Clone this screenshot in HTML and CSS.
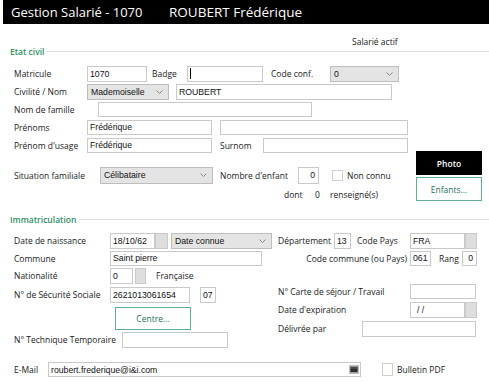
FILE: index.html
```html
<!DOCTYPE html>
<html lang="fr">
<head>
<meta charset="utf-8">
<title>Gestion Salarié - 1070</title>
<link rel="stylesheet" href="styles.css">
</head>
<body>
<header class="titlebar">
  <span class="title-main">Gestion Salarié - 1070</span>
  <span class="title-name">ROUBERT Frédérique</span>
</header>
<div class="status"><span class="status-text">Salarié actif</span></div>
<div class="legend"><span class="legend-text">Etat civil</span><span class="legend-line"></span></div>

<div class="row r1">
  <span class="lbl w73">Matricule</span>
  <span class="field w60">1070</span>
  <span class="lbl ml5 w35">Badge</span>
  <span class="field w76"><span class="caret"></span></span>
  <span class="lbl ml8 w59">Code conf.</span>
  <span class="select w69"><span>0</span><svg class="chev" viewBox="0 0 7 4"><polyline points="0.5,0.5 3.5,3.5 6.5,0.5"/></svg></span>
</div>

<div class="row r2">
  <span class="lbl w73">Civilité / Nom</span>
  <span class="select w82"><span>Mademoiselle</span><svg class="chev" viewBox="0 0 7 4"><polyline points="0.5,0.5 3.5,3.5 6.5,0.5"/></svg></span>
  <span class="field ml7 w216">ROUBERT</span>
</div>

<div class="row r3">
  <span class="lbl w84">Nom de famille</span>
  <span class="field w214"></span>
</div>

<div class="row r4">
  <span class="lbl w73">Prénoms</span>
  <span class="field w125">Frédérique</span>
  <span class="field ml8 w188"></span>
</div>

<div class="split">
  <div class="split-main">
    <div class="row r5">
      <span class="lbl w73">Prénom d'usage</span>
      <span class="field w125">Frédérique</span>
      <span class="lbl ml8 w43">Surnom</span>
      <span class="field w145"></span>
    </div>
    <div class="row r6">
      <span class="lbl w86">Situation familiale</span>
      <span class="select w113"><span>Célibataire</span><svg class="chev" viewBox="0 0 7 4"><polyline points="0.5,0.5 3.5,3.5 6.5,0.5"/></svg></span>
      <span class="lbl ml7 w78">Nombre d'enfant</span>
      <span class="field num w21">0</span>
      <span class="check ml13"></span>
      <span class="lbl ml4">Non connu</span>
    </div>
    <div class="row r7">
      <span class="lbl ml270 w31">dont</span>
      <span class="lbl w15">0</span>
      <span class="lbl">renseigné(s)</span>
    </div>
  </div>
  <div class="side-buttons">
    <button class="btn btn-dark">Photo</button>
    <button class="btn btn-outline">Enfants...</button>
  </div>
</div>

<div class="legend legend2"><span class="legend-text">Immatriculation</span><span class="legend-line"></span></div>

<div class="row r8">
  <span class="lbl w96">Date de naissance</span>
  <span class="field w45">18/10/62</span>
  <span class="sq w13"></span>
  <span class="select ml3 w101"><span>Date connue</span><svg class="chev" viewBox="0 0 7 4"><polyline points="0.5,0.5 3.5,3.5 6.5,0.5"/></svg></span>
  <span class="lbl ml6 w56">Département</span>
  <span class="field w17">13</span>
  <span class="lbl ml6 w53">Code Pays</span>
  <span class="field w55">FRA</span>
  <span class="sq w12"></span>
</div>

<div class="row r9">
  <span class="lbl w96">Commune</span>
  <span class="field w152">Saint pierre</span>
  <span class="lbl right ml40 w108">Code commune (ou Pays)</span>
  <span class="field w21">061</span>
  <span class="lbl ml8 w23">Rang</span>
  <span class="field num w15">0</span>
</div>

<div class="cols">
  <div class="col-left">
    <div class="row r10">
      <span class="lbl w96">Nationalité</span>
      <span class="field w23">0</span>
      <span class="sq ml2 w11"></span>
      <span class="lbl ml10">Française</span>
    </div>
    <div class="row r11">
      <span class="lbl w96">N° de Sécurité Sociale</span>
      <span class="field w80">2621013061654</span>
      <span class="field ml10 w16">07</span>
    </div>
    <div class="row r12">
      <button class="btn btn-outline ml101 w76">Centre...</button>
    </div>
    <div class="row r13">
      <span class="lbl w108">N° Technique Temporaire</span>
      <span class="field w106"></span>
    </div>
  </div>
  <div class="col-right">
    <div class="rrow rr1">
      <span class="lbl w132">N° Carte de séjour / Travail</span>
      <span class="field w66"></span>
    </div>
    <div class="rrow rr2">
      <span class="lbl w132">Date d'expiration</span>
      <span class="field w55 date">/ /</span>
      <span class="sq w12"></span>
    </div>
    <div class="rrow rr3">
      <span class="lbl w84">Délivrée par</span>
      <span class="field w114"></span>
    </div>
  </div>
</div>

<div class="row r14">
  <span class="lbl w34">E-Mail</span>
  <span class="field mail w313"><span>roubert.frederique@i&amp;i.com</span><svg class="mail-icon" viewBox="0 0 10 9"><rect x="0.5" y="0.5" width="9" height="8" fill="#9a9a9a" stroke="#bdbdbd"/><rect x="1.5" y="2" width="7" height="5" fill="#2e2e2e"/><line x1="2" y1="3" x2="8" y2="3" stroke="#777" stroke-width="0.8"/></svg></span>
  <span class="check tall ml21"></span>
  <span class="lbl ml4">Bulletin PDF</span>
</div>
</body>
</html>
```

FILE: styles.css
```css
* { box-sizing: border-box; }
html, body { margin: 0; padding: 0; background: #fff; }
body {
  width: 489px;
  height: 383px;
  overflow: hidden;
  font-family: "Open Sans", "Noto Sans", sans-serif;
  font-size: 8.5px;
  color: #1a1a1a;
}
.titlebar {
  margin-left: 3px;
  height: 24px;
  background: #000;
  color: #fff;
  display: flex;
  align-items: center;
  padding-left: 8px;
  font-size: 13px;
  white-space: nowrap;
}
.title-main { width: 158px; flex: none; }
.title-name { font-size: 13.5px; }
.status { height: 22px; padding-top: 13px; display: flex; }
.status-text { margin-left: 352px; line-height: 10px; }
.legend { height: 10px; display: flex; align-items: center; padding-left: 10px; }
.legend-text { color: #2b8f5f; font-weight: 600; white-space: nowrap; }
.legend-line { flex: 1; height: 1px; background: #dedede; margin-left: 3px; }
.legend2 { margin-top: 12px; }

.row { display: flex; align-items: center; padding-left: 14px; }
.rrow { display: flex; align-items: center; }
.lbl { white-space: nowrap; flex: none; line-height: 10px; }
.right { text-align: right; padding-right: 3px; }
.field {
  flex: none;
  height: 100%;
  border: 1px solid #c9c9c9;
  background: #fff;
  font-family: "Liberation Sans", Arial, sans-serif;
  font-size: 8.7px;
  color: #111;
  padding-left: 2px;
  padding-bottom: 1px;
  display: flex;
  align-items: center;
  white-space: nowrap;
  overflow: hidden;
}
.field.num { justify-content: flex-end; padding-right: 3px; }
.field.date { padding-left: 6px; }
.field.mail { justify-content: space-between; padding-right: 1px; padding-bottom: 0; }
.caret { width: 1px; height: 11px; background: #000; }
.select {
  flex: none;
  height: 100%;
  border: 1px solid #bdbdbd;
  background: #e4e4e4;
  font-family: "Liberation Sans", Arial, sans-serif;
  font-size: 8.7px;
  color: #111;
  padding: 0 5px 1px 3px;
  display: flex;
  align-items: center;
  justify-content: space-between;
  white-space: nowrap;
}
.chev { width: 7px; height: 4px; fill: none; stroke: #8a8a8a; stroke-width: 1; }
.sq { flex: none; height: 100%; background: #dedede; border: 1px solid #cacaca; }
.check { flex: none; width: 11px; height: 11px; border: 1px solid #cfcfcf; background: #fff; }
.check.tall { height: 13px; }
.mail-icon { width: 10px; height: 9px; flex: none; }

.btn {
  flex: none;
  font-family: "Open Sans", "Noto Sans", sans-serif;
  font-size: 8.5px;
  padding: 0;
  cursor: default;
}
.btn-dark { background: #000; color: #fff; border: 1px solid #000; font-weight: 600; height: 24px; }
.btn-outline { background: #fff; color: #24705a; border: 1px solid #5fae92; height: 24px; }

.split { display: flex; }
.split-main { flex: 1; }
.side-buttons {
  width: 66px;
  margin-top: 16px;
  margin-right: 7px;
  display: flex;
  flex-direction: column;
  gap: 2px;
}

.cols { display: flex; }
.col-left { width: 278px; flex: none; }
.col-right { flex: 1; }

.r1 { margin-top: 10px; height: 16px; }
.r2 { margin-top: 2px; height: 16px; }
.r3 { margin-top: 2px; height: 15px; }
.r4 { margin-top: 3px; height: 15px; }
.r5 { margin-top: 3px; height: 15px; }
.r6 { margin-top: 14px; height: 17px; }
.r7 { margin-top: 4px; height: 14px; }
.r8 { margin-top: 9px; height: 16px; }
.r9 { margin-top: 2px; height: 15px; }
.r10 { margin-top: 2px; height: 16px; }
.r11 { margin-top: 3px; height: 16px; }
.r12 { margin-top: 4px; height: 23px; }
.r12 .btn { height: 23px; }
.r13 { margin-top: 2px; height: 16px; }
.rr1 { margin-top: 18px; height: 15px; }
.rr2 { margin-top: 3px; height: 16px; }
.rr3 { margin-top: 3px; height: 16px; }
.r14 { margin-top: 14px; height: 15px; }

.ml2 { margin-left: 2px; }
.ml3 { margin-left: 3px; }
.ml4 { margin-left: 4px; }
.ml5 { margin-left: 5px; }
.ml6 { margin-left: 6px; }
.ml7 { margin-left: 7px; }
.ml8 { margin-left: 8px; }
.ml10 { margin-left: 10px; }
.ml13 { margin-left: 13px; }
.ml21 { margin-left: 21px; }
.ml40 { margin-left: 40px; }
.ml101 { margin-left: 101px; }
.ml270 { margin-left: 270px; }

.w11 { width: 11px; }
.w12 { width: 12px; }
.w13 { width: 13px; }
.w15 { width: 15px; }
.w16 { width: 16px; }
.w17 { width: 17px; }
.w21 { width: 21px; }
.w23 { width: 23px; }
.w31 { width: 31px; }
.w34 { width: 34px; }
.w35 { width: 35px; }
.w43 { width: 43px; }
.w45 { width: 45px; }
.w53 { width: 53px; }
.w55 { width: 55px; }
.w56 { width: 56px; }
.w59 { width: 59px; }
.w60 { width: 60px; }
.w66 { width: 66px; }
.w69 { width: 69px; }
.w73 { width: 73px; }
.w76 { width: 76px; }
.w78 { width: 78px; }
.w80 { width: 80px; }
.w82 { width: 82px; }
.w84 { width: 84px; }
.w86 { width: 86px; }
.w96 { width: 96px; }
.w101 { width: 101px; }
.w106 { width: 106px; }
.w108 { width: 108px; }
.w113 { width: 113px; }
.w114 { width: 114px; }
.w125 { width: 125px; }
.w132 { width: 132px; }
.w145 { width: 145px; }
.w152 { width: 152px; }
.w188 { width: 188px; }
.w214 { width: 214px; }
.w216 { width: 216px; }
.w313 { width: 313px; }
```
